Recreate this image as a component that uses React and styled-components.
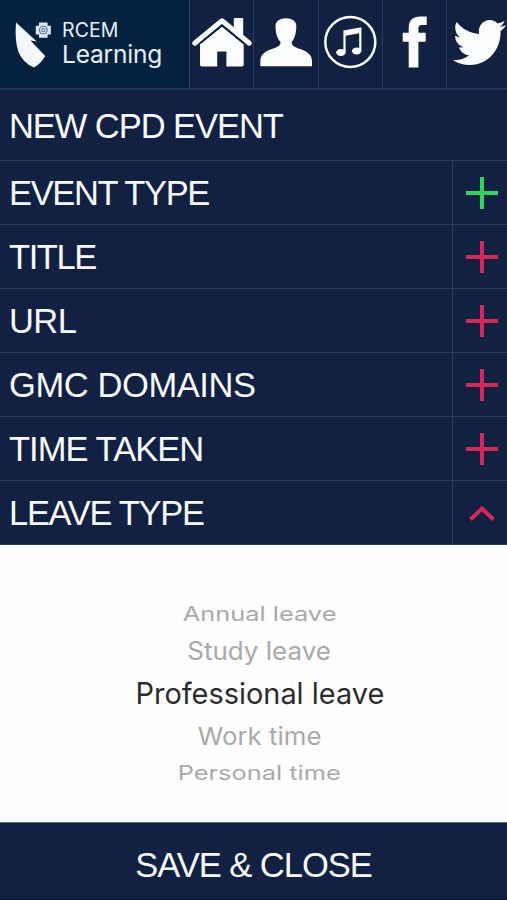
import React from 'react'
import styled, { createGlobalStyle } from 'styled-components'
import { FaTwitter } from 'react-icons/fa'

const GlobalStyle = createGlobalStyle`
    * {
        box-sizing: border-box;
    }
    body {
        margin: 0;
        background-color: #122042;
    }
`
const Screen = styled.div`
    width: 507px;
    height: 900px;
    display: flex;
    flex-direction: column;
    background-color: #122042;
    color: #f6faff;
    font-family: "Liberation Sans", Arial, sans-serif;
    overflow: hidden;
`
const Bar = styled.header`
    height: 90px;
    display: grid;
    grid-template-columns: 189px 64px 65px 64px 64px 61px;
    border-bottom: 2px solid #26365a;
`
const Brand = styled.div`
    display: flex;
    background-color: #052140;
`
const BrandMark = styled.svg`
    width: 62px;
    height: 88px;
    flex: none;
`
const BrandName = styled.div`
    display: flex;
    flex-direction: column;
    padding-top: 18px;
    font-family: Inter, sans-serif;
    color: #e6f0fb;
`
const BrandTop = styled.span`
    font-size: 19.5px;
    line-height: 24px;
    letter-spacing: 0.1px;
`
const BrandBottom = styled.span`
    font-size: 24.5px;
    line-height: 24px;
    letter-spacing: -0.2px;
`
const NavItem = styled.div`
    border-left: 1px solid #2c3c5f;
    display: flex;

    svg {
        display: block;
    }
`
const NavIcon = styled.svg`
    width: 100%;
    height: 88px;
    fill: #fbfdff;
`
const Bird = styled(FaTwitter)`
    width: 53px;
    height: 45px;
    margin: 20px 0 0 6px;
    flex: none;
    color: #fbfdff;
`
const Title = styled.div`
    height: 71px;
    padding: 2px 0 0 9px;
    display: flex;
    align-items: center;
    border-bottom: 1px solid #2a3a5d;
`
const Row = styled.div`
    height: 64px;
    display: grid;
    grid-template-columns: 452px 55px;
    border-bottom: 1px solid #2a3a5d;
`
const RowName = styled.div`
    padding-left: 9px;
    display: flex;
    align-items: center;
`
const Label = styled.span`
    font-size: 34.5px;
    line-height: 40px;
    white-space: nowrap;
    letter-spacing: ${props => props.$spacing || 0}px;
`
const Toggle = styled.div`
    border-left: 1px solid #2a3a5d;
    display: flex;
    align-items: center;
    justify-content: center;
    padding-left: 3px;
    color: ${props => props.$done ? '#2fd65c' : '#d6275a'};

    svg {
        width: 32px;
        height: 32px;
        fill: none;
        stroke: currentColor;
        stroke-width: 4;
    }
`
const Picker = styled.div`
    height: 277px;
    padding: 52px 0 0 12px;
    display: flex;
    flex-direction: column;
    align-items: center;
    background-color: #fefefe;
    font-family: Inter, sans-serif;
`
const Option = styled.div`
    height: ${props => props.$height}px;
    display: flex;
    align-items: center;
    white-space: nowrap;
    font-size: ${props => props.$size}px;
    color: ${props => props.$active ? '#2b2b2b' : '#a9a9a9'};
    transform: scaleX(${props => props.$stretch});
`
const Save = styled.div`
    height: 78px;
    padding-top: 7px;
    display: flex;
    align-items: center;
    justify-content: center;
    border-top: 1px solid #5f6a85;
    border-bottom: 1px solid #080f24;
`

const rows = [
    { name: 'EVENT TYPE', done: true, spacing: -1.35 },
    { name: 'TITLE', spacing: -1.4 },
    { name: 'URL', spacing: -0.6 },
    { name: 'GMC DOMAINS', spacing: -0.4 },
    { name: 'TIME TAKEN', spacing: -0.95 },
    { name: 'LEAVE TYPE', open: true, spacing: -1.3 },
]

// outer options are flattened, like the far sides of a wheel
const options = [
    { name: 'Annual leave', size: 20, height: 34, stretch: 1.27 },
    { name: 'Study leave', size: 25, height: 39, stretch: 1.04 },
    { name: 'Professional leave', size: 29.5, height: 46, stretch: 0.98, active: true },
    { name: 'Work time', size: 24.5, height: 39, stretch: 1.055 },
    { name: 'Personal time', size: 20, height: 35, stretch: 1.27 },
]

function Logo() {
    return (
        <BrandMark viewBox="0 0 62 88">
            <path fill="#f4f8fd" d="M16 22.5 L36.8 41.6 L30.5 40.5 L45.2 56 Q41 63.5 34 67.6 Q23 63 18.5 52 Q14.5 41 16 22.5Z" />
            <path fill="#dce8f5" d="M39 22.5h8.6v3.2h3.2v8.8h-3.2v3.2H39v-3.2h-3.2v-8.8H39z" />
            <circle cx="43.3" cy="30.1" r="4" fill="none" stroke="#52677f" strokeWidth="1" />
            <circle cx="43.3" cy="30.1" r="1.7" fill="none" stroke="#52677f" strokeWidth="1" />
        </BrandMark>
    )
}

function Header() {
    return (
        <Bar>
            <Brand>
                <Logo />
                <BrandName>
                    <BrandTop>RCEM</BrandTop>
                    <BrandBottom>Learning</BrandBottom>
                </BrandName>
            </Brand>
            <NavItem>
                <NavIcon viewBox="190 0 63 88">
                    <path d="M233.8 34V19q0-1 1-1h7.4q1 0 1 1v22z" />
                    <path d="M194.7 43.2L222 20.8L249.3 43.2" fill="none" stroke="#fbfdff" strokeWidth="5" strokeLinecap="round" strokeLinejoin="round" />
                    <path d="M222 26.8L243.7 44.6V64.8q0 1.8-1.8 1.8H226.4V51.4h-9.2v15.2H201.8q-1.8 0-1.8-1.8V44.6z" />
                    <path d="M200 43.2L222 25.2L244 43.2" fill="none" stroke="#122042" strokeWidth="1.6" />
                </NavIcon>
            </NavItem>
            <NavItem>
                <NavIcon viewBox="254 0 64 88">
                    <path d="M260.3 66.3V61C260.3 54 266 51 272 49C278 47 280.5 45.5 280.5 42C277 38.5 275.5 32 275.5 26C275.5 21 280 18.2 286 18.2C292 18.2 296.3 21 296.3 26C296.3 32 295 38.5 291.7 42C291.7 45.5 294 47 300 49C306 51 312 54 312 61V66.3Z" />
                </NavIcon>
            </NavItem>
            <NavItem>
                <NavIcon viewBox="319 0 63 88">
                    <circle cx="350.3" cy="42" r="25" fill="none" stroke="#fbfdff" strokeWidth="2.5" />
                    <path d="M343.4 30.6L361.4 27.3V51H359.2V33.2L345.6 35.7V53H343.4z" />
                    <ellipse cx="340.9" cy="52.5" rx="4.7" ry="3.5" />
                    <ellipse cx="356.6" cy="51" rx="4.7" ry="3.5" />
                </NavIcon>
            </NavItem>
            <NavItem>
                <NavIcon viewBox="383 0 63 88">
                    <path d="M408.7 67.6V41.8H402.7V32.8H408.7V28C408.7 20 413 16.5 420.5 16.5H426.7V25H422.5C419.3 25 418.4 26 418.4 29V32.8H425.7V41.8H418.4V67.6z" />
                </NavIcon>
            </NavItem>
            <NavItem>
                <Bird viewBox="0 48 512 416" preserveAspectRatio="none" />
            </NavItem>
        </Bar>
    )
}

function App() {

    return (
        <Screen>
            <GlobalStyle />
            <Header />
            <Title>
                <Label $spacing={-1.05}>NEW CPD EVENT</Label>
            </Title>
            {rows.map(row => (
                <Row key={row.name}>
                    <RowName>
                        <Label $spacing={row.spacing}>{row.name}</Label>
                    </RowName>
                    <Toggle $done={row.done}>
                        <svg viewBox="0 0 32 32">
                            {row.open
                                ? <path d="M4.5 22.5L16 11.5L27.5 22.5" />
                                : <path d="M0 16H32M16 0V32" />}
                        </svg>
                    </Toggle>
                </Row>
            ))}
            <Picker>
                {options.map(option => (
                    <Option
                        key={option.name}
                        $size={option.size}
                        $height={option.height}
                        $stretch={option.stretch}
                        $active={option.active}
                    >
                        {option.name}
                    </Option>
                ))}
            </Picker>
            <Save>
                <Label $spacing={-1}>SAVE &amp; CLOSE</Label>
            </Save>
        </Screen>
    )
}
export default App;
